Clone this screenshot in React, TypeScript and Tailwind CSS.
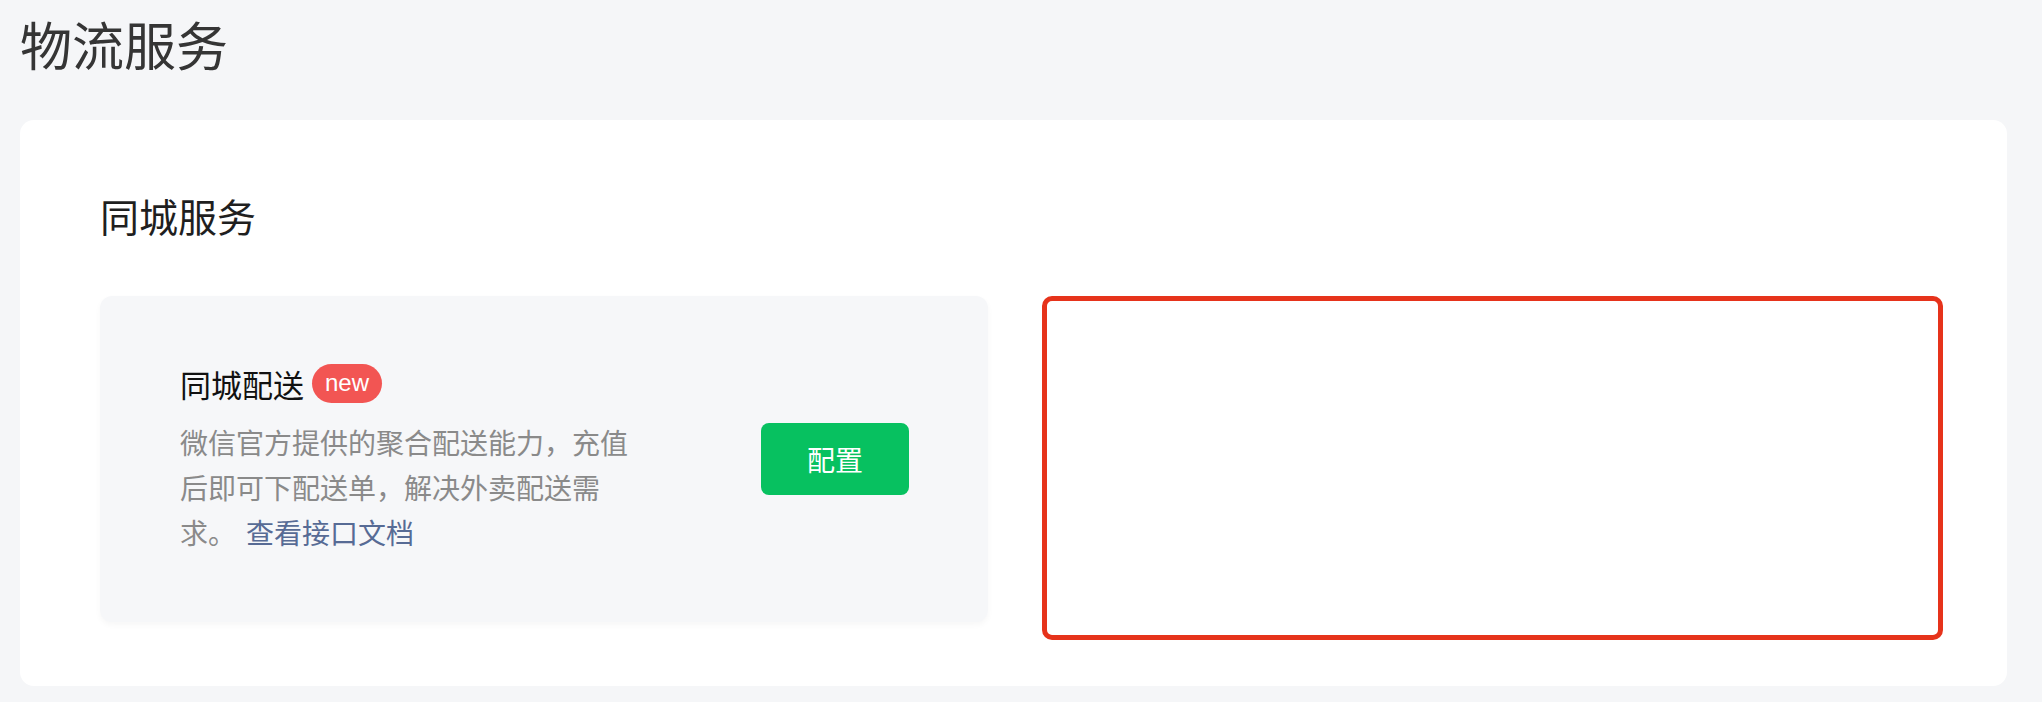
import React from "react";

const CityDeliveryCard: React.FC = () => {
  return (
    <div className="flex h-[326px] w-[888px] shrink-0 items-center justify-between rounded-[12px] bg-[#f6f7f9] pl-[80px] pr-[79px] shadow-[0_3px_6px_rgba(0,0,0,0.035)]">
      <div>
        <div className="flex items-center gap-[8px]">
          <span className="text-[31px] leading-none text-[#111]">同城配送</span>
          <span className="flex h-[39px] w-[70px] items-center justify-center rounded-full bg-[#f25553] font-['Liberation_Sans',sans-serif] text-[24px] leading-none text-white">
            new
          </span>
        </div>
        {/* lines broken by hand, same as the 452px wrap */}
        <p className="mt-[17px] w-[452px] text-[28px] leading-[45px] text-[#8a8a8a]">
          <span>微信官方提供的聚合配送能力，充值</span>
          <br />
          <span>后即可下配送单，解决外卖配送需</span>
          <br />
          <span>求。</span>
          <a className="ml-[10px] text-[#576b95]">查看接口文档</a>
        </p>
      </div>
      <button className="h-[72px] w-[148px] rounded-[8px] bg-[#07c160] text-[28px] leading-none text-white">
        配置
      </button>
    </div>
  );
};

const App: React.FC = () => {
  return (
    <div className="min-h-screen bg-[#f5f6f8] px-[20px] pb-[16px] pt-[18px] font-['Noto_Sans_CJK_SC',sans-serif]">
      <h1 className="text-[52px] font-normal leading-none text-[#353535]">
        物流服务
      </h1>
      <div className="mt-[50px] w-[1987px] rounded-[14px] bg-white pb-[46px] pl-[80px] pr-[62px] pt-[76px]">
        <h2 className="text-[39px] font-normal leading-none text-[#1f1f1f]">
          同城服务
        </h2>
        <div className="mt-[61px] flex items-start gap-[54px]">
          <CityDeliveryCard />
          <div className="h-[344px] w-[901px] rounded-[10px] border-[5px] border-[#e6331b]" />
        </div>
      </div>
    </div>
  );
};

export default App;
